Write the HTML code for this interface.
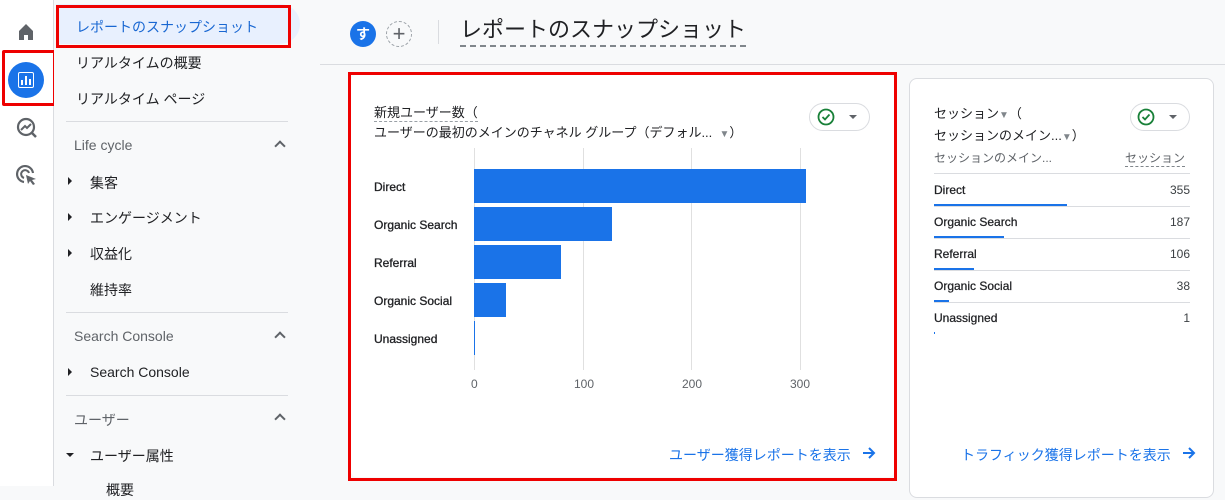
<!DOCTYPE html>
<html><head><meta charset="utf-8"><style>
*{margin:0;padding:0;box-sizing:border-box}
body{width:1225px;height:486px;overflow:hidden;background:#f8f9fa;font-family:"Liberation Sans","Noto Sans CJK JP",sans-serif;color:#202124;position:relative}
.a{position:absolute}
.t{font-size:14px;white-space:nowrap}
.rail{left:0;top:0;width:54px;height:486px;background:#fff;border-right:1px solid #dadce0}
.nav{left:54px;top:0;width:266px;height:486px;background:#f8f9fa}
.hr{height:1px;background:#dadce0}
.tri{width:0;height:0;border-top:4px solid transparent;border-bottom:4px solid transparent;border-left:4px solid #202124}
.chev{width:8px;height:8px;border-left:2px solid #5f6368;border-top:2px solid #5f6368;transform:rotate(45deg)}
.g{font-size:12px;color:#202124;-webkit-text-stroke:0.3px #202124}
.grid{width:1px;background:#e0e0e0;top:148px;height:222px}
.bar{background:#1a73e8;left:474px}
.ax{font-size:12px;color:#5f6368}
.row{left:934px;width:256px;font-size:12px}
.row b{font-weight:normal;-webkit-text-stroke:0.25px #202124}
.lnk{font-size:14px;color:#1a73e8;white-space:nowrap}
</style></head><body>
<div class="a rail"></div>
<svg class="a" style="left:16px;top:22px" width="20" height="20" viewBox="0 0 20 20"><path d="M3 9 L10 2 L17 9 V18 H12 V13 H8 V18 H3Z" fill="#5f6368"/></svg>
<div class="a" style="left:2px;top:50px;width:54px;height:56px;border:3px solid #e00;border-radius:2px"></div>
<div class="a" style="left:8px;top:62px;width:36px;height:36px;border-radius:50%;background:#1a73e8"></div>
<div class="a" style="left:18px;top:72px;width:16px;height:16px;border:1.5px solid #fff;border-radius:2px"></div>
<div class="a" style="left:21px;top:80px;width:2px;height:5px;background:#fff"></div>
<div class="a" style="left:25px;top:76px;width:2px;height:9px;background:#fff"></div>
<div class="a" style="left:29px;top:79px;width:2px;height:6px;background:#fff"></div>
<svg class="a" style="left:16px;top:117px" width="22" height="22" viewBox="0 0 22 22"><circle cx="10" cy="10" r="8" fill="none" stroke="#5f6368" stroke-width="2.2"/><path d="M5 13 L9 9 L11 11 L15 7" fill="none" stroke="#5f6368" stroke-width="2"/><path d="M16 16 L20 20" stroke="#5f6368" stroke-width="2.5"/></svg>
<svg class="a" style="left:16px;top:165px" width="22" height="22" viewBox="0 0 22 22"><path d="M17 8 A8 8 0 1 0 8 17" fill="none" stroke="#5f6368" stroke-width="2.2"/><path d="M13 8 A4 4 0 1 0 8 13" fill="none" stroke="#5f6368" stroke-width="2"/><path d="M10 10 L20 14 L16 15 L19 19 L17 20 L14 16 L12 19Z" fill="#5f6368"/></svg>

<div class="a nav"></div>
<div class="a" style="left:56px;top:4px;width:244px;height:40px;background:#e8f0fe;border-radius:0 20px 20px 0"></div>
<div class="a" style="left:56px;top:5px;width:235px;height:43px;border:3px solid #e00"></div>
<div class="a t" style="left:76px;top:17px;color:#1967d2">レポートのスナップショット</div>
<div class="a t" style="left:76px;top:53px">リアルタイムの概要</div>
<div class="a t" style="left:76px;top:89px">リアルタイム ページ</div>
<div class="a hr" style="left:66px;top:121px;width:222px"></div>
<div class="a t" style="left:74px;top:137px;color:#5f6368">Life cycle</div>
<div class="a chev" style="left:276px;top:142px"></div>
<div class="a tri" style="left:68px;top:177px"></div><div class="a t" style="left:90px;top:173px">集客</div>
<div class="a tri" style="left:68px;top:213px"></div><div class="a t" style="left:90px;top:208px">エンゲージメント</div>
<div class="a tri" style="left:68px;top:249px"></div><div class="a t" style="left:90px;top:244px">収益化</div>
<div class="a t" style="left:90px;top:280px">維持率</div>
<div class="a hr" style="left:66px;top:312px;width:222px"></div>
<div class="a t" style="left:74px;top:328px;color:#5f6368">Search Console</div>
<div class="a chev" style="left:276px;top:333px"></div>
<div class="a tri" style="left:68px;top:368px"></div><div class="a t" style="left:90px;top:364px">Search Console</div>
<div class="a hr" style="left:66px;top:395px;width:222px"></div>
<div class="a t" style="left:74px;top:410px;color:#5f6368">ユーザー</div>
<div class="a chev" style="left:276px;top:415px"></div>
<div class="a" style="left:66px;top:453px;border-left:4px solid transparent;border-right:4px solid transparent;border-top:4px solid #202124"></div>
<div class="a t" style="left:90px;top:446px">ユーザー属性</div>
<div class="a t" style="left:106px;top:480px">概要</div>

<div class="a hr" style="left:320px;top:64px;width:905px;background:#dadce0"></div>
<div class="a" style="left:350px;top:21px;width:26px;height:26px;border-radius:50%;background:#1a73e8;color:#fff;font-size:14px;font-weight:bold;text-align:center;line-height:26px">す</div>
<div class="a" style="left:386px;top:21px;width:26px;height:26px;border-radius:50%;border:1px dashed #9aa0a6;color:#5f6368;font-size:22px;text-align:center;line-height:23px">+</div>
<div class="a" style="left:438px;top:20px;width:1px;height:24px;background:#dadce0"></div>
<div class="a" style="left:460px;top:16px;font-size:22px;white-space:nowrap;border-bottom:2px dashed #80868b;padding-bottom:1px;line-height:28px">レポートのスナップショット</div>

<div class="a" style="left:351px;top:75px;width:543px;height:402px;background:#fff;border-radius:6px"></div>
<div class="a" style="left:348px;top:72px;width:549px;height:409px;border:3px solid #e00"></div>
<div class="a" style="left:374px;top:104px;font-size:13px;border-bottom:1px dashed #9aa0a6;line-height:17px;white-space:nowrap">新規ユーザー数（</div>
<div class="a" style="left:374px;top:124px;font-size:13px;line-height:17px;white-space:nowrap">ユーザーの最初のメインのチャネル グループ（デフォル... &nbsp;<span style="color:#80868b;font-size:10px">▼</span>）</div>
<div class="a" style="left:809px;top:103px;width:61px;height:28px;border:1px solid #dadce0;border-radius:14px"></div>
<svg class="a" style="left:817px;top:108px" width="18" height="18" viewBox="0 0 18 18"><circle cx="9" cy="9" r="7.5" fill="none" stroke="#188038" stroke-width="1.8"/><path d="M5.5 9 L8 11.5 L12.5 6.5" fill="none" stroke="#188038" stroke-width="1.8"/></svg>
<div class="a" style="left:849px;top:115px;border-left:4px solid transparent;border-right:4px solid transparent;border-top:4px solid #5f6368"></div>
<div class="a grid" style="left:474px"></div><div class="a grid" style="left:583px"></div><div class="a grid" style="left:691px"></div><div class="a grid" style="left:800px"></div>
<div class="a bar" style="top:169px;height:34px;width:332px"></div>
<div class="a bar" style="top:207px;height:34px;width:138px"></div>
<div class="a bar" style="top:245px;height:34px;width:87px"></div>
<div class="a bar" style="top:283px;height:34px;width:32px"></div>
<div class="a bar" style="top:321px;height:34px;width:1px"></div>
<div class="a g" style="left:374px;top:180px">Direct</div>
<div class="a g" style="left:374px;top:218px">Organic Search</div>
<div class="a g" style="left:374px;top:256px">Referral</div>
<div class="a g" style="left:374px;top:294px">Organic Social</div>
<div class="a g" style="left:374px;top:332px">Unassigned</div>
<div class="a ax" style="left:471px;top:377px">0</div>
<div class="a ax" style="left:574px;top:377px">100</div>
<div class="a ax" style="left:682px;top:377px">200</div>
<div class="a ax" style="left:790px;top:377px">300</div>
<div class="a lnk" style="left:669px;top:445px">ユーザー獲得レポートを表示</div>
<svg class="a" style="left:862px;top:446px" width="14" height="14" viewBox="0 0 14 14"><path d="M1 7 H12 M7 2 L12 7 L7 12" fill="none" stroke="#1a73e8" stroke-width="2"/></svg>

<div class="a" style="left:909px;top:78px;width:305px;height:420px;background:#fff;border:1px solid #dadce0;border-radius:8px"></div>
<div class="a" style="left:934px;top:104px;font-size:13px;line-height:20px;white-space:nowrap">セッション<span style="color:#80868b;font-size:10px">▼</span>（<br>セッションのメイン...<span style="color:#80868b;font-size:10px">▼</span>）</div>
<div class="a" style="left:1130px;top:103px;width:60px;height:28px;border:1px solid #dadce0;border-radius:14px"></div>
<svg class="a" style="left:1137px;top:108px" width="18" height="18" viewBox="0 0 18 18"><circle cx="9" cy="9" r="7.5" fill="none" stroke="#188038" stroke-width="1.8"/><path d="M5.5 9 L8 11.5 L12.5 6.5" fill="none" stroke="#188038" stroke-width="1.8"/></svg>
<div class="a" style="left:1169px;top:115px;border-left:4px solid transparent;border-right:4px solid transparent;border-top:4px solid #5f6368"></div>
<div class="a" style="left:934px;top:149px;font-size:12px;color:#5f6368;white-space:nowrap">セッションのメイン...</div>
<div class="a" style="left:1125px;top:149px;font-size:12px;color:#5f6368;border-bottom:1px dashed #80868b;white-space:nowrap">セッション</div>
<div class="a hr" style="left:934px;top:173px;width:256px"></div>
<div class="a row" style="top:183px"><b>Direct</b><span style="float:right;color:#3c4043">355</span></div>
<div class="a" style="left:934px;top:204px;width:133px;height:2px;background:#1a73e8"></div>
<div class="a hr" style="left:934px;top:206px;width:256px"></div>
<div class="a row" style="top:215px"><b>Organic Search</b><span style="float:right;color:#3c4043">187</span></div>
<div class="a" style="left:934px;top:236px;width:70px;height:2px;background:#1a73e8"></div>
<div class="a hr" style="left:934px;top:238px;width:256px"></div>
<div class="a row" style="top:247px"><b>Referral</b><span style="float:right;color:#3c4043">106</span></div>
<div class="a" style="left:934px;top:268px;width:40px;height:2px;background:#1a73e8"></div>
<div class="a hr" style="left:934px;top:270px;width:256px"></div>
<div class="a row" style="top:279px"><b>Organic Social</b><span style="float:right;color:#3c4043">38</span></div>
<div class="a" style="left:934px;top:300px;width:15px;height:2px;background:#1a73e8"></div>
<div class="a hr" style="left:934px;top:302px;width:256px"></div>
<div class="a row" style="top:311px"><b>Unassigned</b><span style="float:right;color:#3c4043">1</span></div>
<div class="a" style="left:934px;top:332px;width:1px;height:2px;background:#1a73e8"></div>
<div class="a lnk" style="left:961px;top:445px">トラフィック獲得レポートを表示</div>
<svg class="a" style="left:1182px;top:446px" width="14" height="14" viewBox="0 0 14 14"><path d="M1 7 H12 M7 2 L12 7 L7 12" fill="none" stroke="#1a73e8" stroke-width="2"/></svg>
</body></html>
